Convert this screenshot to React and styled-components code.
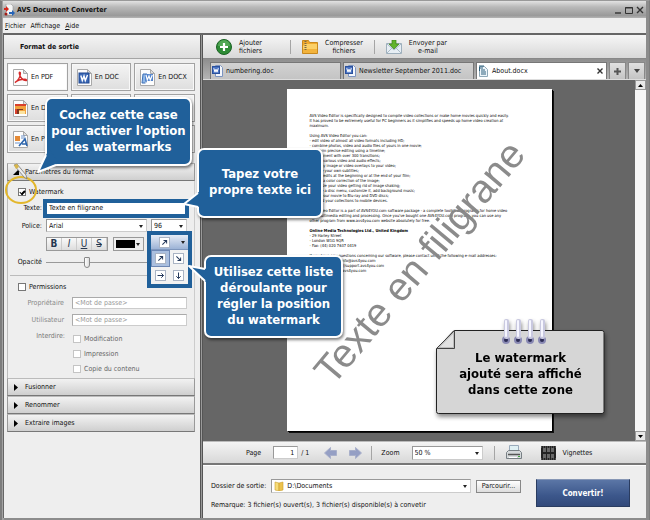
import React, { useState } from 'react';
import styled, { createGlobalStyle, css } from 'styled-components';

const GlobalStyle = createGlobalStyle`
	* { box-sizing: border-box; }
	body { margin: 0; background: #8c8c8c; }
	body, button, input, select {
		font-family: 'DejaVu Sans Condensed', 'DejaVu Sans', sans-serif;
		font-size: 7px;
		color: #111;
	}
	button, input, select { margin: 0; padding: 0; border-radius: 0; }
`

/* ---------- window ---------- */

const Window = styled.div`
	display: flex; flex-direction: column;
	min-height: 100vh;
	border: 1px solid #7d7d7d;
	border-top-color: #999;
	padding: 0 3px 3px 2px;
	background: linear-gradient(90deg, #6a6a6a, #b5b5b5 2px, #8c8c8c 3px);
`
const TitleBar = styled.header`
	display: flex; align-items: center; gap: 2px;
	height: 17px; padding: 0 1px;
	background: linear-gradient(#e2e2e2, #b9b9b9 35%, #9a9a9a 85%, #b4b4b4);
	h1 { flex: 1; margin: 0; font-size: 7px; font-weight: bold; }
`
const WindowButton = styled.button`
	width: 9px; height: 12px; border: 0; background: none;
	svg { display: block; }
`
const MenuBar = styled.nav`
	display: flex; align-items: center; gap: 5px;
	height: 15px; padding: 0 2px;
	background: #eee;
	a { color: #111; text-decoration: none; }
`
const Main = styled.main`
	display: flex; flex: 1;
	border-top: 2px solid #666;
`

/* ---------- sidebar ---------- */

const Sidebar = styled.aside`
	position: relative;
	flex: 0 0 197px;
	border-left: 1px solid #666;
	background: #eee;
`
const Splitter = styled.div`
	flex: 0 0 3px;
	background: linear-gradient(90deg, #555 1px, #999 1px, #999 2px, #555 2px);
`
const SidebarTitle = styled.h2`
	margin: 0; padding: 0 16px;
	height: 24px; line-height: 24px;
	font-size: 7px;
	border-bottom: 1px solid #a5a5a5;
	background: linear-gradient(#f4f4f4, #dcdcdc);
`
const FormatGrid = styled.div`
	display: grid; grid-template-columns: repeat(3, 1fr); gap: 3px;
	padding: 4px 5px 10px 3px;
`
const FormatButton = styled.button`
	display: flex; align-items: center; gap: 3px;
	height: 28px; padding: 0 5px;
	border: 1px solid #a2a2a2;
	background: ${p => p.$active ? '#fff' : 'linear-gradient(#f4f4f4, #dedede)'};
	box-shadow: inset 0 0 0 1px #f8f8f8;
	white-space: nowrap;
`
const SectionHead = styled.button`
	display: flex; align-items: center; gap: 6px;
	width: 100%; height: 18px; padding: 0 5px;
	border: 1px solid #999; border-top-color: #bbb; border-bottom-color: #777;
	background: linear-gradient(#f2f2f2, #cfcfcf);
	svg { flex: none; }
`
const Sections = styled.div`
	padding: 0 5px 0 3px;
`
const SectionBody = styled.div`
	padding: 3px 7px 2px 2px;
	border-left: 1px solid #bbb; border-right: 1px solid #ccc;
`
const Row = styled.div`
	display: flex; align-items: center;
	height: ${p => p.$h || 17}px;
	padding-left: ${p => p.$indent || 0}px;
	gap: ${p => p.$gap || 4}px;
`
const Label = styled.label`
	flex: 0 0 ${p => p.$w}px;
	text-align: right;
	color: ${p => p.$dim ? '#888' : '#111'};
`
const CheckLabel = styled.label`
	display: flex; align-items: center; gap: 3px;
	color: ${p => p.$dim ? '#666' : '#111'};
	input {
		appearance: none;
		width: 8px; height: 8px;
		border: 1px solid ${p => p.$dim ? '#c4c4c4' : '#777'};
		background: #fff;
	}
	input:checked::after {
		content: ''; display: block;
		width: 4px; height: 2px; margin: 1px;
		border-left: 1px solid #000; border-bottom: 2px solid #000;
		transform: rotate(-45deg);
	}
`
const HighlightBox = styled.div`
	flex: 1; height: 19px; margin-right: -2px;
	border: 4px solid #20609a;
	background: #fff;
	input { display: block; width: 100%; height: 11px; border: 0; padding: 0 2px; outline: 0; background: #fff; }
`
const SelectBox = styled.div`
	position: relative;
	flex: ${p => p.$w ? `0 0 ${p.$w}px` : '1'};
	height: ${p => p.$h || 13}px;
	select {
		appearance: none;
		display: block; width: 100%; height: 100%;
		padding: 0 12px 0 ${p => p.$pad || 2}px;
		border: 1px solid #999; border-right-color: #ccc; border-bottom-color: #ccc;
		background: #fff;
	}
	&::after {
		content: ''; position: absolute; right: 4px; top: 50%; margin-top: -1px;
		border: 2px solid transparent; border-top: 3px solid #222; border-bottom: 0;
		pointer-events: none;
	}
	> svg { position: absolute; left: 3px; top: 2px; pointer-events: none; }
`
const StyleGroup = styled.div`
	display: flex;
	border: 1px solid #999;
	button {
		width: 15px; height: 12px; border: 0; border-right: 1px solid #ccc;
		background: linear-gradient(#fafafa, #ddd);
		color: #26374f; font-size: 10px; line-height: 12px;
	}
`
const caret = css`
	&::after {
		content: '';
		border: 2px solid transparent; border-top: 3px solid #222; border-bottom: 0;
	}
`
const ColorButton = styled.button`
	display: flex; align-items: center; justify-content: space-between;
	width: 31px; height: 14px; padding: 0 3px 0 2px;
	border: 1px solid #999; background: #eee;
	span { width: 19px; height: 8px; background: #000; }
	${caret}
`
const PositionPicker = styled.div`
	position: relative; z-index: 1;
	align-self: flex-start;
	width: 45px; height: 57px; margin: -3px -5px 0 -2px;
	border: 4px solid #20609a;
	background: #f2f2f2;
`
const PositionToggle = styled.button`
	display: flex; align-items: center; justify-content: space-between;
	width: 100%; height: 15px; padding: 0 3px 0 8px;
	border: 0; border-bottom: 1px solid #7f97bd;
	background: linear-gradient(#e6ecf6, #9cb3d6);
	${caret}
`
const PositionMenu = styled.div`
	display: grid; grid-template-columns: 1fr 1fr;
	button {
		display: grid; place-items: center;
		height: 17px; border: 1px solid transparent; background: none;
	}
	button[aria-pressed='true'] { border-color: #6d87b4; background: #aabfdf; }
`
const Slider = styled.input`
	appearance: none;
	width: 104px; height: 12px;
	background: linear-gradient(#999, #999) center / 100% 1px no-repeat;
	&::-webkit-slider-thumb {
		appearance: none;
		width: 6px; height: 11px;
		border: 1px solid #888; border-radius: 1px 1px 3px 3px;
		background: linear-gradient(90deg, #fff, #ddd);
	}
`
const Divider = styled.hr`
	margin: 5px 0 3px; border: 0; border-top: 1px solid #bbb;
`
const PasswordInput = styled.input`
	flex: 1; min-width: 0; height: 12px;
	padding: 0 2px;
	border: 1px solid #aaa; border-right-color: #ccc; border-bottom-color: #ccc;
	background: #fff;
	&::placeholder { color: #999; opacity: 1; }
`
const ForbidBlock = styled.div`
	display: flex; align-items: flex-start; gap: 8px;
	padding-top: 3px;
	> span { flex: 0 0 55px; padding-top: 1px; text-align: right; color: #777; }
`

/* ---------- right side ---------- */

const Content = styled.section`
	display: flex; flex-direction: column; flex: 1; min-width: 0;
`
const Toolbar = styled.div`
	display: flex; align-items: center;
	height: 24px; padding-left: 13px;
	background: linear-gradient(#f6f6f6, #d8d8d8);
	border-bottom: 1px solid #888;
`
const ToolButton = styled.button`
	display: flex; align-items: center; gap: 7px;
	height: 16px; min-width: ${p => p.$min || 0}px; border: 0; background: none;
	line-height: 8px; text-align: center; white-space: pre;
	svg { flex: none; }
`
const ToolSep = styled.i`
	width: 1px; height: 14px; margin: 0 ${p => p.$m || 11}px;
	background: #a5a5a5;
`
const TabBar = styled.div`
	display: flex; align-items: flex-end; gap: 2px;
	height: 21px; padding: 0 1px 0 7px;
	background: linear-gradient(#8e8e8e, #b4b4b4);
	border-bottom: 1px solid #ddd;
`
const Tab = styled.button`
	display: flex; align-items: center; gap: 3px;
	flex: 1; min-width: 0; height: 17px; padding: 0 3px 0 1px;
	border: 1px solid #777; border-bottom: 0;
	background: ${p => p.$active ? '#fff' : 'linear-gradient(#d2d2d2, #c4c4c4)'};
	white-space: nowrap;
	span { flex: 1; text-align: left; }
	svg { flex: none; }
`
const TabTool = styled.button`
	display: grid; place-items: center;
	width: 17px; height: 17px; border: 1px solid #888; border-bottom: 0;
	background: linear-gradient(#e0e0e0, #c4c4c4);
`
const Viewer = styled.div`
	position: relative;
	display: flex; flex: 1;
	background: #666;
`
const Stage = styled.div`
	flex: 1; display: flex; justify-content: center; align-items: flex-start;
	padding: 9px 0 10px;
`
const Page = styled.article`
	position: relative;
	width: 265px; height: 342px; padding: 24px 0 0 23px;
	background: #fff;
	box-shadow: 1px 1px 0 #000, 2px 2px 0 #111;
	font-size: 4px; line-height: 5px;
	white-space: pre;
	color: #000;
	p { margin: 0 0 5px; }
	strong { display: block; }
`
const Watermark = styled.div`
	position: absolute; inset: 0;
	display: flex; justify-content: center; align-items: center;
	padding-top: 4px;
	font: 40px/40px 'Liberation Sans', Arial, sans-serif;
	color: #858585; opacity: 0.95;
	span { flex: none; transform: rotate(-50deg); }
`
const ScrollBar = styled.div`
	display: flex; flex-direction: column; justify-content: space-between;
	flex: 0 0 11px; background: #f6f6f6;
	button { display: grid; place-items: center; width: 11px; height: 10px; border: 1px solid #999; background: #e8e8e8; }
`
const Pager = styled.div`
	display: flex; align-items: center;
	height: 24px; padding-left: 43px;
	border-top: 1px solid #bbb; border-bottom: 2px solid #777;
	background: linear-gradient(#f4f4f4, #d8d8d8);
	label { margin-right: 12px; }
	.total { margin: 0 15px 0 3px; }
`
const PageInput = styled.input`
	width: 25px; height: 13px; padding: 0 3px;
	border: 1px solid #999; border-right-color: #ccc; border-bottom-color: #ccc;
	text-align: right;
`
const IconButton = styled.button`
	display: flex; align-items: center; gap: 7px;
	border: 0; background: none;
	margin-right: ${p => p.$mr || 0}px;
`
const Output = styled.form`
	display: flex; gap: 15px;
	height: 53px; padding: 13px 16px 0 8px;
	background: #eee;
	border-top: 1px solid #fff;
`
const OutputFields = styled.div`
	flex: 1; min-width: 0;
	p { margin: 0; line-height: 24px; white-space: nowrap; }
`
const BrowseButton = styled.button`
	width: 45px; height: 13px;
	border: 1px solid #888;
	background: linear-gradient(#fff, #ddd);
`
const ConvertButton = styled.button`
	width: 94px; height: 28px;
	border: 1px solid #2a3c60; border-top-color: #8797b5;
	background: linear-gradient(#5b76a6, #3c578b 60%, #32497a);
	color: #fff; font-size: 8px; font-weight: bold;
`

/* ---------- callouts over the window ---------- */

const Callout = styled.div`
	position: absolute; z-index: 3;
	left: ${p => p.$x}px; top: ${p => p.$y}px;
	display: grid; place-items: center;
	width: ${p => p.$w}px; height: ${p => p.$h}px;
	padding-bottom: 2px;
	border: 2px solid #fff; border-radius: 7px;
	background: #20609a;
	box-shadow: 1px 2px 3px rgba(0,0,0,0.5);
	color: #fff; font-size: 13px; font-weight: bold; line-height: 16px;
	text-align: center; white-space: pre;
	svg { position: absolute; overflow: visible; left: 0; top: 0; }
`
const Ring = styled.svg`
	position: absolute; z-index: 2; left: 0; top: 128px;
`
const Note = styled.div`
	position: absolute; z-index: 2; right: 41px; bottom: 27px;
	display: grid; place-items: center;
	width: 169px; height: 84px; padding-top: 3px;
	border-radius: 2px;
	filter: drop-shadow(1px 3px 2px rgba(0,0,0,0.45));
	color: #000; font-size: 13px; font-weight: bold; line-height: 16px;
	text-align: center; white-space: pre;
	span { position: relative; }
	svg { position: absolute; left: 0; top: -12px; }
`

/* ---------- icons ---------- */

const Sheet = ({ children, w = 15, h = 17 }) => (
	<svg width={w} height={h} viewBox="0 0 15 17">
		<path d="M.5.5h10l4 4v12h-14z" fill="#fdfdfd" stroke="#a9a9a9" />
		<path d="M10.500 .5v4h4z" fill="#ddd" stroke="#a9a9a9" />
		{children}
	</svg>
)

const PdfIcon = () => (
	<Sheet>
		<path d="M2 13.500C5 12 7.500 7.500 7.400 4.200 7.300 2.500 6 3 6.300 4.600 7 8.500 10 11.500 13 11.600 14 11.500 13.500 10.300 12 10.300 8 10.300 4 11.500 2 13.500z" fill="none" stroke="#d62a2a" strokeWidth="1.400" />
	</Sheet>
)

const DocIcon = ({ w, h }) => (
	<Sheet w={w} h={h}>
		<rect x="2" y="4" width="10" height="10" fill="#3b68b5" stroke="#1f4790" />
		<path d="M3.800 6.500l1.500 5 1.700-4.500 1.300 4.500 2.200-5.500" fill="none" stroke="#fff" strokeWidth="1.400" />
	</Sheet>
)

const DocxIcon = () => (
	<Sheet>
		<path d="M2 14l1-9h4l-1 9z" fill="#8fb7e6" stroke="#3e71b8" />
		<rect x="5" y="5" width="8" height="7" fill="#5585cc" />
		<path d="M6 6l1.300 5 1.700-4 1.300 4 2-5M5 14h7" fill="none" stroke="#fff" strokeWidth="1.200" />
	</Sheet>
)

const TabDocIcon = () => (
	<svg width="11" height="12" viewBox="0 0 11 12">
		<path d="M3.500.5h5l2 2v9h-7z" fill="#f4f7fc" stroke="#7c94c0" />
		<rect x=".5" y="1.500" width="7" height="7" fill="#4a74c4" stroke="#2b519c" />
		<path d="M1.800 3.200l1.200 4 1-3 1 3 1.300-4" fill="none" stroke="#fff" />
	</svg>
)

const ImageIcon = () => (
	<Sheet>
		<rect x="2" y="4" width="11" height="10" fill="#f1a13c" />
		<path d="M2 4h11v2H2zM2 9h2v5H2z" fill="#d8402c" />
		<path d="M4 9h6v1H4zM4 10h2v4H4z" fill="#7c3420" />
		<path d="M6 11h6v3H6z" fill="#fbe3a0" />
	</Sheet>
)

const RtfIcon = () => (
	<Sheet>
		<rect x="2" y="5" width="5" height="5" fill="#e58a35" />
		<path d="M8 5h4M8 7h4M2 12h5" stroke="#6e94cb" />
		<path d="M6 15l6-7 2 7M9 13h4" fill="none" stroke="#2b64ac" strokeWidth="1.600" />
	</Sheet>
)

const AboutIcon = () => (
	<svg width="11" height="12" viewBox="0 0 11 12">
		<path d="M1.500 1.500h5l3 3v7h-8z" fill="#eef5fa" stroke="#8fa9b8" />
		<path d="M1 1h5M2 3h3M3 5h4M3 7h5M3 9h5M1.500 2v4" stroke="#2e607c" />
	</svg>
)

const AppIcon = () => (
	<svg width="11" height="12" viewBox="0 0 11 12">
		<path d="M2 0h5l2 2v9H2z" fill="#f5f5f5" stroke="#999" strokeWidth=".6" />
		<path d="M0 4h2V2l3 3-3 3V6H0z" fill="#d4281e" />
		<path d="M5 8h3V6l3 3-3 3v-2H5z" fill="#2463b8" />
		<circle cx="2" cy="10" r="1.500" fill="#a01c16" />
	</svg>
)

const ARROWS = { ne: -45, se: 45, e: 0, s: 90 }

const ArrowIcon = ({ dir }) => (
	<svg width="11" height="11" viewBox="0 0 11 11">
		<rect x=".5" y=".5" width="10" height="10" fill="#fff" stroke="#aab4c4" />
		<path d="M2.500 5.500h6M6.300 3.300l2.200 2.200-2.200 2.200" transform={`rotate(${ARROWS[dir]} 5.500 5.500)`} fill="none" stroke="#263a5c" />
	</svg>
)

const Triangle = ({ open }) => (
	<svg width="6" height="7" viewBox="0 0 6 7">
		<path d={open ? 'M6 0v6H0z' : 'M1 0l4 3.500L1 7z'} fill="#000" />
	</svg>
)

const PlusIcon = () => (
	<svg width="16" height="16" viewBox="0 0 16 16">
		<circle cx="8" cy="8" r="7.500" fill="#2e8b35" stroke="#1c6325" />
		<path d="M2 7a6 6 0 0112 0z" fill="#62b564" opacity=".7" />
		<path d="M8 4v8M4 8h8" stroke="#fff" strokeWidth="2.200" />
	</svg>
)

const FolderIcon = () => (
	<svg width="16" height="14" viewBox="0 0 16 14">
		<path d="M.5 .5h6l1 2h8v11H.5z" fill="#f0a92c" stroke="#c8891e" />
		<path d="M3 4h12v9H1V6z" fill="#fbd067" />
		<path d="M1 9h14v4H1z" fill="#f2b33c" />
		<path d="M3.500 1v10" stroke="#77694a" strokeWidth="2" strokeDasharray="1 1" />
	</svg>
)

const DocsFolderIcon = () => (
	<svg width="10" height="10" viewBox="0 0 10 10">
		<path d="M1 1l4 1v8L1 9z" fill="#f7dc78" stroke="#c9a02e" strokeWidth=".6" />
		<path d="M5 2l4-1v8l-4 1z" fill="#edc24c" stroke="#c9a02e" strokeWidth=".6" />
	</svg>
)

const MailIcon = () => (
	<svg width="16" height="14" viewBox="0 0 16 14">
		<path d="M.5 3.500h15v10H.5z" fill="#e7eef4" stroke="#9fb0bd" />
		<path d="M1 4l7 6 7-6M1 13l5-5M15 13l-5-5" fill="none" stroke="#a9bac6" />
		<path d="M6 0h4v4h3L8 9 3 4h3z" fill="#62b32c" stroke="#3c8518" strokeWidth=".7" />
	</svg>
)

const PageArrow = ({ flip }) => (
	<svg width="13" height="12" viewBox="0 0 13 12">
		<path d="M.5 6L6.500.5V3.500h6v5h-6v3z" transform={flip ? 'rotate(180 6.500 6)' : undefined} fill="#959fc4" stroke="#a9b0ca" />
	</svg>
)

const PrinterIcon = () => (
	<svg width="16" height="15" viewBox="0 0 16 15">
		<path d="M3.500.5h9v7h-9z" fill="#dff0f4" stroke="#9ab" />
		<path d="M.5 7.500l2-2h11l2 2v6H.5z" fill="#d4d8da" stroke="#777f84" />
		<path d="M2 9.500h12" stroke="#555" strokeWidth="1.500" />
		<path d="M3 12.500h8" stroke="#fff" />
		<rect x="12" y="11" width="2" height="1" fill="#3ba43a" />
	</svg>
)

const ThumbsIcon = () => (
	<svg width="15" height="14" viewBox="0 0 15 14">
		<rect width="15" height="14" fill="#222" />
		<path d="M2 2h3v4H2zM6 2h3v4H6zM10 2h3v4h-3zM2 8h3v4H2zM6 8h3v4H6zM10 8h3v4h-3z" fill="#686868" />
		<path d="M0 1h15M0 13h15" stroke="#777" strokeDasharray="1 1" />
	</svg>
)

/* tail polygon and the white line on its two free edges, in callout coordinates */
const Tail = ({ points, edge }) => (
	<svg width="1" height="1">
		<polygon points={points} fill="#20609a" />
		<polyline points={edge} fill="none" stroke="#fff" strokeWidth="2" strokeLinejoin="round" />
	</svg>
)

const FORMATS = [
	{ id: 'pdf', label: 'En PDF', Icon: PdfIcon },
	{ id: 'doc', label: 'En DOC', Icon: DocIcon },
	{ id: 'docx', label: 'En DOCX', Icon: DocxIcon },
	{ id: 'images', label: 'En D', Icon: ImageIcon },
	{ id: 'odt', Icon: DocIcon },
	{ id: 'rtf', Icon: RtfIcon },
	{ id: 'ppt', label: 'En P', Icon: RtfIcon },
	{ id: 'txt', Icon: DocIcon },
	{ id: 'html', Icon: DocxIcon },
]

const App = () => {
	const [format, setFormat] = useState('pdf')
	const [position, setPosition] = useState('ne')
	const [text, setText] = useState('Texte en filigrane')

	return (
		<>
			<GlobalStyle />
			<Window>
				<TitleBar>
					<AppIcon />
					<h1>AVS Document Converter</h1>
					<WindowButton aria-label="Réduire"><svg width="8" height="12"><path d="M1 9h6" stroke="#333" strokeWidth="1.400" /></svg></WindowButton>
					<WindowButton aria-label="Agrandir"><svg width="8" height="12"><path d="M.5 3.500h7v6h-7zM0 4h8" stroke="#333" fill="none" /></svg></WindowButton>
					<WindowButton aria-label="Fermer"><svg width="8" height="12"><path d="M1 3l6 6M7 3l-6 6" stroke="#333" strokeWidth="1.400" /></svg></WindowButton>
				</TitleBar>
				<MenuBar>
					<a href="#fichier"><u>F</u>ichier</a>
					<a href="#affichage">Aff<u>i</u>chage</a>
					<a href="#aide"><u>A</u>ide</a>
				</MenuBar>
				<Main>
					<Sidebar>
						<SidebarTitle>Format de sortie</SidebarTitle>
						<FormatGrid>
							{FORMATS.map(({ id, label, Icon }) => (
								<FormatButton key={id} aria-label={id} $active={format === id} onClick={() => setFormat(id)}>
									<Icon />{label}
								</FormatButton>
							))}
						</FormatGrid>
						<Sections>
							<SectionHead><Triangle open />Paramètres du format</SectionHead>
							<SectionBody>
								<Row $h={15} $indent={8}>
									<CheckLabel><input type="checkbox" defaultChecked />Watermark</CheckLabel>
								</Row>
								<Row $h={18} $gap={1}>
									<Label $w={32} htmlFor="texte">Texte:</Label>
									<HighlightBox><input id="texte" value={text} onChange={e => setText(e.target.value)} /></HighlightBox>
								</Row>
								<Row>
									<Label $w={32} htmlFor="police">Police:</Label>
									<SelectBox><select id="police"><option>Arial</option></select></SelectBox>
									<SelectBox $w={36}><select aria-label="Taille"><option>96</option></select></SelectBox>
								</Row>
								<Row $h={20} $indent={36} $gap={5}>
									<StyleGroup>
										<button aria-label="Gras"><b>B</b></button>
										<button aria-label="Italique"><i>I</i></button>
										<button aria-label="Souligné"><u>U</u></button>
										<button aria-label="Barré"><s>S</s></button>
									</StyleGroup>
									<ColorButton aria-label="Couleur"><span /></ColorButton>
									<PositionPicker>
										<PositionToggle aria-label="Position"><ArrowIcon dir={position} /></PositionToggle>
										<PositionMenu>
											{Object.keys(ARROWS).map(dir => (
												<button key={dir} aria-label={dir} aria-pressed={position === dir} onClick={() => setPosition(dir)}>
													<ArrowIcon dir={dir} />
												</button>
											))}
										</PositionMenu>
									</PositionPicker>
								</Row>
								<Row $h={16}>
									<Label $w={32} htmlFor="opacite">Opacité</Label>
									<Slider id="opacite" type="range" defaultValue="39" />
								</Row>
								<Divider />
								<Row $h={15} $indent={8}>
									<CheckLabel><input type="checkbox" />Permissions</CheckLabel>
								</Row>
								<Row $gap={8}>
									<Label $w={54} $dim htmlFor="owner">Propriétaire</Label>
									<PasswordInput id="owner" placeholder="<Mot de passe>" />
								</Row>
								<Row $gap={8}>
									<Label $w={54} $dim htmlFor="user">Utilisateur</Label>
									<PasswordInput id="user" placeholder="<Mot de passe>" />
								</Row>
								<ForbidBlock>
									<span>Interdire:</span>
									<div>
										{['Modification', 'Impression', 'Copie du contenu'].map(name => (
											<Row $h={15} key={name}>
												<CheckLabel $dim><input type="checkbox" />{name}</CheckLabel>
											</Row>
										))}
									</div>
								</ForbidBlock>
							</SectionBody>
							{['Fusionner', 'Renommer', 'Extraire images'].map(name => (
								<SectionHead key={name}><Triangle />{name}</SectionHead>
							))}
						</Sections>

						<Ring width="34" height="44" viewBox="0 0 34 44">
							<ellipse cx="17" cy="27" rx="15" ry="13" fill="none" stroke="#e3b72c" strokeWidth="2" />
							<path d="M10 2l10 12 3 2-1-4L13 1z" fill="#eee" stroke="#777" strokeWidth=".8" />
							<path d="M10 2l3-1 2 3-3 2z" fill="#d8b64a" />
						</Ring>
						<Callout $x={41} $y={62} $w={147} $h={69}>
							{'Cochez cette case\npour activer l\'option\ndes watermarks'}
							<Tail points="2,50 -9,73 12,64" edge="-1,56 -9,73 9,66" />
						</Callout>
						<Callout $x={193} $y={113} $w={126} $h={70}>
							{'Tapez votre\npropre texte ici'}
							<Tail points="1,41 -15,54 1,57" edge="-1,43 -15,54 -1,57" />
						</Callout>
						<Callout $x={200} $y={220} $w={139} $h={83}>
							{'Utilisez cette liste\ndéroulante pour\nrégler la position\ndu watermark'}
							<Tail points="1,12 -17,9 1,26" edge="-1,12 -17,9 -1,24" />
						</Callout>
					</Sidebar>
					<Splitter />
					<Content>
						<Toolbar>
							<ToolButton $min={63}><PlusIcon />{'Ajouter\nfichiers'}</ToolButton>
							<ToolSep $m={11} />
							<ToolButton><FolderIcon />{'Compresser\nfichiers'}</ToolButton>
							<ToolSep $m={11} />
							<ToolButton><MailIcon />{'Envoyer par\ne-mail'}</ToolButton>
						</Toolbar>
						<TabBar>
							<Tab><TabDocIcon /><span>numbering.doc</span></Tab>
							<Tab><TabDocIcon /><span>Newsletter September 2011.doc</span></Tab>
							<Tab $active>
								<AboutIcon /><span>About.docx</span>
								<svg width="6" height="6"><path d="M.5.5l5 5M5.500.5l-5 5" stroke="#333" strokeWidth="1.400" /></svg>
							</Tab>
							<TabTool aria-label="Nouvel onglet"><svg width="7" height="7"><path d="M3.500 0v7M0 3.500h7" stroke="#555" strokeWidth="2" /></svg></TabTool>
							<TabTool aria-label="Liste des onglets"><svg width="6" height="4"><path d="M0 0h6L3 4z" fill="#444" /></svg></TabTool>
						</TabBar>
						<Viewer>
							<Stage>
								<Page>
									<p>{'AVS Video Editor is specifically designed to compile video collections or make home movies quickly and easily.\nIt has proved to be extremely useful for PC beginners as it simplifies and speeds up home video creation at\nmaximum.'}</p>
									<p>{`Using AVS Video Editor you can:
- edit video of almost all video formats including HD;
- combine photos, video and audio files of yours in one movie;
- perform precise editing using a timeline;
- experiment with over 300 transitions;
- apply various video and audio effects;
- overlay image or video overlays to your video;
- create your own subtitles;
- add credits at the beginning or at the end of your film;
- make a color correction of the image;
- stabilize your video getting rid of image shaking;
- create a disc menu, customize it, add background music;
- burn your movie to Blu-ray and DVD discs;
- upload your collections to mobile devices.`}</p>
									<p>{'AVS Video Editor is a part of AVS4YOU.com software package - a complete toolkit of programs for home video\nand multimedia editing and processing. Once you\'ve bought one AVS4YOU.com program, you can use any\nother program from www.avs4you.com website absolutely for free.'}</p>
									<p><strong>Online Media Technologies Ltd., United Kingdom</strong>{'- 29 Harley Street\n- London W1G 9QR\n- Fax: (44) 020 7637 0419'}</p>
									<p>{'If you have any questions concerning our software, please contact us at the following e-mail addresses:\n- for information: info@avs4you.com\n- for support: http://support.avs4you.com\n- for sales: sales@avs4you.com'}</p>
									<Watermark><span>{text}</span></Watermark>
								</Page>
							</Stage>
							<Note>
								<svg width="169" height="96" viewBox="0 0 169 96">
									<path d="M18 12.500H166q2 0 2 2V93.500q0 2-2 2H2.500q-2 0-2-2V31z" fill="#d6d6d6" stroke="#222" />
									<path d="M18.500 12.500V30.500H.5z" fill="#bdbdbd" stroke="#444" />
									<path d="M17 16V29H4z" fill="#e2e2e2" />
									{[70, 82, 94, 106].map(x => (
										<g key={x}>
											<circle cx={x} cy="22" r="4" fill="#8a8ab4" />
											<circle cx={x} cy="22" r="2" fill="#2c2c55" />
											<rect x={x - 2} y="1" width="5" height="20" rx="2" fill="#c9c9e0" />
											<rect x={x - 1} y="2" width="2" height="17" rx="1" fill="#f6f6ff" />
										</g>
									))}
								</svg>
								<span>{'Le watermark\najouté sera affiché\ndans cette zone'}</span>
							</Note>
							<ScrollBar>
								<button aria-label="Haut"><svg width="5" height="3"><path d="M0 3h5L2.500 0z" /></svg></button>
								<button aria-label="Bas"><svg width="5" height="3"><path d="M0 0h5L2.500 3z" /></svg></button>
							</ScrollBar>
						</Viewer>
						<Pager>
							<label htmlFor="page">Page</label>
							<PageInput id="page" defaultValue="1" />
							<span className="total">/ 1</span>
							<IconButton $mr={12} aria-label="Page précédente"><PageArrow /></IconButton>
							<IconButton aria-label="Page suivante"><PageArrow flip /></IconButton>
							<ToolSep $m={9} />
							<label htmlFor="zoom">Zoom</label>
							<SelectBox $w={71} $h={14}><select id="zoom"><option>50 %</option></select></SelectBox>
							<ToolSep $m={11} />
							<IconButton $mr={19} aria-label="Imprimer"><PrinterIcon /></IconButton>
							<IconButton><ThumbsIcon />Vignettes</IconButton>
						</Pager>
						<Output onSubmit={e => e.preventDefault()}>
							<OutputFields>
								<Row $h={14} $gap={5}>
									<label htmlFor="dossier">Dossier de sortie:</label>
									<SelectBox $h={14} $pad={15}>
										<select id="dossier"><option>D:\Documents</option></select>
										<DocsFolderIcon />
									</SelectBox>
									<BrowseButton type="button">Parcourir...</BrowseButton>
								</Row>
								<p>Remarque: 3 fichier(s) ouvert(s), 3 fichier(s) disponible(s) à convetir</p>
							</OutputFields>
							<ConvertButton>Convertir!</ConvertButton>
						</Output>
					</Content>
				</Main>
			</Window>
		</>
	)
}

export default App
